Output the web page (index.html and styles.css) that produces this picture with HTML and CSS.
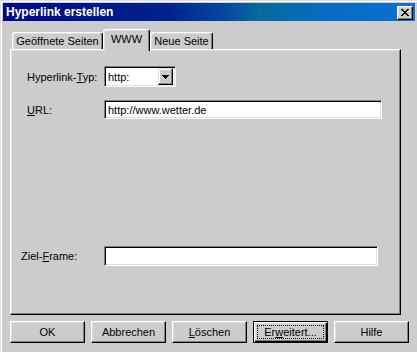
FILE: index.html
```html
<!DOCTYPE html>
<html lang="de">
<head>
<meta charset="utf-8">
<title>Hyperlink erstellen</title>
<link rel="stylesheet" href="styles.css">
</head>
<body>
<div class="dialog">
  <div class="titlebar">
    <span class="title">Hyperlink erstellen</span>
    <div class="close">
      <svg width="8" height="7" viewBox="0 0 8 7" shape-rendering="crispEdges"><path fill="#000" d="M0 0h2v1h-2z M6 0h2v1h-2z M1 1h2v1h-2z M5 1h2v1h-2z M2 2h4v1h-4z M3 3h2v1h-2z M2 4h4v1h-4z M1 5h2v1h-2z M5 5h2v1h-2z M0 6h2v1h-2z M6 6h2v1h-2z"/></svg>
    </div>
  </div>
  <div class="content">
    <div class="tabs">
      <div class="tab t1">Geöffnete Seiten</div>
      <div class="tab active t2">WWW</div>
      <div class="tab t3">Neue Seite</div>
    </div>
    <div class="panel">
      <div class="row r1">
        <span class="lbl">Hyperlink-<u>T</u>yp:</span>
        <div class="select">
          <span class="selval">http:</span>
          <span class="dropbtn"><svg width="7" height="4" viewBox="0 0 7 4" shape-rendering="crispEdges"><path fill="#000" d="M0 0h7v1h-7z M1 1h5v1h-5z M2 2h3v1h-3z M3 3h1v1h-1z"/></svg></span>
        </div>
      </div>
      <div class="row r2">
        <span class="lbl"><u>U</u>RL:</span>
        <div class="field url">http://www.wetter.de</div>
      </div>
      <div class="row r3">
        <span class="lbl">Ziel-<u>F</u>rame:</span>
        <div class="field frame"></div>
      </div>
    </div>
    <div class="buttons">
      <div class="btn">OK</div>
      <div class="btn">Abbrechen</div>
      <div class="btn"><span><u>L</u>öschen</span></div>
      <div class="btn default"><span class="focus">Er<u>w</u>eitert...</span></div>
      <div class="btn">Hilfe</div>
    </div>
  </div>
</div>
</body>
</html>
```
FILE: styles.css
```css
html, body {
  margin: 0;
  padding: 0;
}
body {
  width: 417px;
  height: 352px;
  overflow: hidden;
  background: #cccccc;
  font-family: "Liberation Sans", Arial, sans-serif;
  font-size: 11px;
  color: #000;
}
.dialog {
  box-sizing: border-box;
  height: 352px;
  padding: 3px 2px 0 3px;
  box-shadow: inset 1px 1px #dfdfdf, inset 2px 2px #ffffff;
}
.titlebar {
  height: 18px;
  display: flex;
  align-items: center;
  justify-content: space-between;
  padding: 0 2px 0 3px;
  background: linear-gradient(90deg, #000a80 0%, #00228e 40%, #05489f 54%, #086a9e 62%, #0a6bc6 80%, #0b70d2 100%);
  color: #fff;
  font-weight: bold;
  font-size: 12px;
}
.title {
  line-height: 18px;
}
.close {
  box-sizing: border-box;
  width: 16px;
  height: 14px;
  margin-top: 1px;
  background: #cccccc;
  border: 1px solid;
  border-color: #fff #000 #000 #fff;
  box-shadow: inset -1px -1px #808080, inset 1px 1px #dfdfdf;
  display: flex;
  align-items: center;
  justify-content: center;
}
.content {
  padding: 8px 0 0 7px;
}
.tabs {
  display: flex;
  align-items: flex-end;
  height: 20px;
  padding-left: 2px;
  position: relative;
  z-index: 1;
}
.tab {
  box-sizing: border-box;
  height: 17px;
  border: 1px solid;
  border-bottom: none;
  border-color: #fff #000 transparent #fff;
  border-radius: 3px 3px 0 0;
  box-shadow: inset -1px 0 #808080, inset 1px 1px #dfdfdf;
  background: #cccccc;
  text-align: center;
  line-height: 16px;
  white-space: nowrap;
}
.t1 { width: 91px; }
.t2 { width: 47px; }
.t3 { width: 63px; }
.tab.active {
  height: 22px;
  margin-bottom: -2px;
  line-height: 19px;
}
.panel {
  box-sizing: border-box;
  width: 391px;
  height: 266px;
  border: 1px solid;
  border-color: #fff #000 #000 #fff;
  box-shadow: inset -1px -1px #808080, inset 1px 1px #dfdfdf;
  padding: 16px 0 0 16px;
  display: flex;
  flex-direction: column;
}
.row {
  display: flex;
  align-items: center;
}
.lbl {
  width: 77px;
  flex: none;
}
.select, .field {
  box-sizing: border-box;
  background: #fff;
  border: 1px solid;
  border-color: #808080 #fff #fff #808080;
  box-shadow: inset 1px 1px #000, inset -1px -1px #dfdfdf;
}
.r1 { height: 21px; }
.select {
  width: 72px;
  height: 21px;
  display: flex;
  align-items: center;
  padding: 2px 2px 2px 3px;
}
.selval {
  flex: 1;
}
.dropbtn {
  box-sizing: border-box;
  width: 15px;
  height: 17px;
  background: #cccccc;
  border: 1px solid;
  border-color: #dfdfdf #000 #000 #dfdfdf;
  box-shadow: inset -1px -1px #808080, inset 1px 1px #fff;
  display: flex;
  align-items: center;
  justify-content: center;
}
.r2 {
  margin-top: 13px;
}
.field {
  display: flex;
  align-items: center;
  padding: 0 3px;
  white-space: nowrap;
}
.url {
  width: 278px;
  height: 19px;
}
.r3 {
  margin-top: 127px;
  margin-left: -6px;
}
.r3 .lbl {
  width: 83px;
}
.frame {
  width: 274px;
  height: 20px;
}
.buttons {
  display: flex;
  gap: 6px;
  margin-top: 6px;
}
.btn {
  box-sizing: border-box;
  width: 75px;
  height: 22px;
  border: 1px solid;
  border-color: #fff #000 #000 #fff;
  box-shadow: inset -1px -1px #808080, inset 1px 1px #dfdfdf;
  display: flex;
  align-items: center;
  justify-content: center;
}
.btn.default {
  border-color: #000;
  box-shadow: inset 1px 1px #fff, inset -1px -1px #000, inset -2px -2px #808080, inset 2px 2px #dfdfdf;
  padding: 3px;
}
.focus {
  box-sizing: border-box;
  flex: 1;
  align-self: stretch;
  border: 1px dotted #000;
  display: flex;
  align-items: center;
  justify-content: center;
}
```
